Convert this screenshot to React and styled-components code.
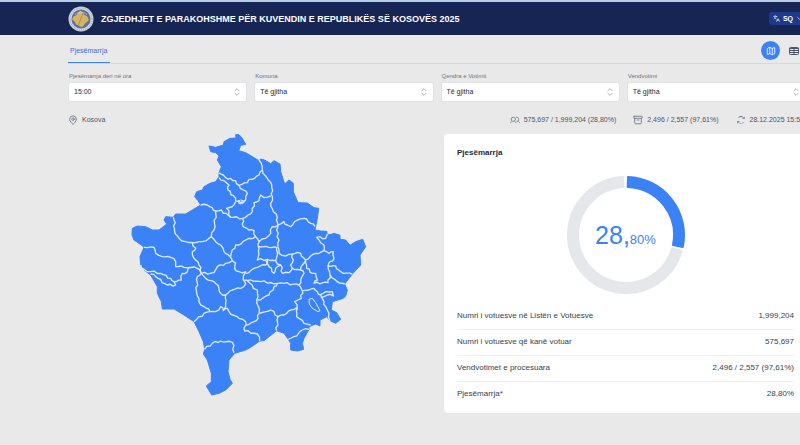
import styled, { createGlobalStyle } from "styled-components";
import { LuArchive, LuMapPin, LuMap, LuLanguages, LuChevronDown, LuChevronsUpDown } from "react-icons/lu";
import { PiUsers, PiArrowsClockwise } from "react-icons/pi";

const filters = [
  { id: "ora", label: "Pjesëmarrja deri në ora", value: "15:00" },
  { id: "komuna", label: "Komuna", value: "Të gjitha" },
  { id: "qendra", label: "Qendra e Votimit", value: "Të gjitha" },
  { id: "vendvotimi", label: "Vendvotimi", value: "Të gjitha" },
];

const rows = [
  ["Numri i votuesve në Listën e Votuesve", "1,999,204"],
  ["Numri i votuesve që kanë votuar", "575,697"],
  ["Vendvotimet e procesuara", "2,496 / 2,557 (97,61%)"],
  ["Pjesëmarrja*", "28,80%"],
];

const country =
  "255,48 275,52 298,45 300,35 318,25 336,24 335,14 345,14 354,24 365,43 350,46 344,62 365,68 405,92 410,87 422,90 440,101 450,92 468,102 470,125 482,162 495,150 508,160 508,185 522,218 550,219 570,233 584,235 580,265 573,300 590,303 608,304 610,315 622,313 630,310 648,316 648,328 665,330 678,346 695,335 716,328 725,350 708,375 710,405 685,432 662,462 670,480 665,498 658,505 625,515 622,540 638,548 650,568 635,580 618,572 608,560 588,570 588,588 575,582 555,590 555,598 540,625 535,640 539,658 520,663 500,660 500,640 493,628 480,610 458,602 435,620 420,632 407,633 380,652 365,660 332,670 315,690 312,725 318,748 325,760 305,780 285,790 263,795 247,768 262,755 262,730 250,690 238,672 242,658 238,635 225,605 210,575 180,555 150,537 115,537 112,515 100,490 100,470 80,435 60,420 50,405 48,380 60,352 52,345 30,330 24,315 25,295 40,288 65,290 85,300 105,300 118,290 128,282 120,270 125,260 148,262 155,252 185,252 205,240 230,225 222,212 212,200 218,185 235,180 240,170 258,160 275,155 285,140 285,128 292,110 280,90 285,78 275,68 260,65";

const borders = [
  "285,128 298,135 305,143 320,145 335,152 345,166 370,158 375,148 385,148 405,135 415,120 412,100 405,90",
  "285,143 300,152 315,165 312,180 328,197 335,213 350,218 362,215",
  "345,166 358,180 370,190 365,210 350,218",
  "335,215 325,230 308,235 320,262",
  "230,225 250,225 265,233 275,243 292,240 298,250 312,255 320,262 355,265 365,262 372,255 385,245 390,218 405,212 410,195 420,203 440,198",
  "415,120 430,145 443,165 445,200 440,220 448,245 460,262 462,285",
  "462,285 480,275 490,285 500,290 520,270 540,265 548,267 560,280 573,290",
  "275,243 270,300 262,320 235,335 205,338 185,335 165,325 152,305 150,270 148,262",
  "262,320 275,335 290,345 300,365 318,380",
  "355,265 358,290 375,300 390,302 395,320 405,335 425,325 440,310 445,290 462,285",
  "395,320 375,325 365,330 345,345 335,345 325,360 320,380",
  "205,338 215,355 205,365 210,385 225,405 232,430",
  "60,352 90,352 95,370 115,380 140,382 155,395 155,410 180,412 220,415 232,430",
  "232,430 270,428 280,410 305,400 325,392 318,380",
  "50,405 60,418 80,425 110,430 140,445 150,455 155,465 130,465 95,440 80,432",
  "150,455 172,450 175,430 190,425 195,412",
  "232,430 220,440 218,490 225,515 240,530 258,545",
  "210,575 240,550 258,545 275,545 290,530 298,542 310,535 315,545 345,565 365,575 362,603 400,612 407,633",
  "232,430 245,445 270,455 285,475 290,490 305,495 305,520 300,540",
  "305,495 325,480 350,475 365,462 358,450",
  "325,392 335,400 332,415 345,425 365,425 358,438 358,450 380,450 410,455 440,458 480,460 525,465 535,482",
  "365,430 385,418 400,412 425,405 430,390",
  "535,482 555,480 570,475 580,485 590,495 600,515 605,530 615,550 618,572",
  "590,493 605,485 625,485 628,498 610,495 590,503",
  "535,482 532,505 512,515 520,535 518,560 540,580 560,585",
  "520,532 500,540 480,555 462,560 440,540 425,545 405,550 402,565 390,575 365,585",
  "462,560 458,602",
  "370,452 388,475 400,480 398,510 405,548",
  "400,510 435,495 450,470 460,460",
  "493,628 510,620 535,600 555,598",
  "242,658 265,640 290,633 325,637 330,668",
  "405,335 405,355 403,380 400,390 430,388 455,392 460,375 458,352 435,352 405,350",
  "462,285 458,300 465,330 462,350 465,370 485,378 505,372 530,370 545,390",
  "545,390 560,378 575,370 600,362 600,345 585,330 578,322 605,325 610,312",
  "600,362 615,370 628,365 630,385 618,395 612,408 635,408 650,425 685,432",
  "545,390 535,405 530,420 540,430 530,450 525,465",
  "545,390 548,415 565,430 575,430 580,450 570,460 612,458 618,435 612,408",
  "618,435 640,455 662,462",
  "425,390 435,410 450,430 455,415 470,405 475,430 495,428 505,415 530,420",
  "505,372 508,390 500,405 505,415",
  "455,392 460,402 470,405",
];

const lakes = [
  "555,508 565,505 575,518 588,542 582,545 565,535 556,522",
  "342,213 350,210 360,213 356,221 345,221",
];

// breaks long straight stretches of a border into small bends
function bend(points) {
  const list = points.split(" ").map((p) => p.split(",").map(Number));
  const out = [list[0]];
  for (let i = 1; i < list.length; i++) {
    const [x1, y1] = list[i - 1];
    const [x2, y2] = list[i];
    const length = Math.hypot(x2 - x1, y2 - y1);
    const steps = Math.max(1, Math.round(length / 9));
    for (let s = 1; s < steps; s++) {
      const t = s / steps;
      const shift = (((x1 * 7 + y2 * 3 + s * 5) % 7) - 3) * 1.1;
      out.push([
        x1 + (x2 - x1) * t - ((y2 - y1) / length) * shift,
        y1 + (y2 - y1) * t + ((x2 - x1) / length) * shift,
      ]);
    }
    out.push([x2, y2]);
  }
  return out.join(" ");
}

// ring segment between two angles, in degrees clockwise from the top
function segment(from, to, outer, inner) {
  const point = (deg, r) => {
    const a = ((deg - 90) * Math.PI) / 180;
    return `${60 + r * Math.cos(a)} ${60 + r * Math.sin(a)}`;
  };
  const large = to - from > 180 ? 1 : 0;
  return `M${point(from, outer)} A${outer} ${outer} 0 ${large} 1 ${point(to, outer)} L${point(to, inner)} A${inner} ${inner} 0 ${large} 0 ${point(from, inner)} Z`;
}

function Emblem() {
  return (
    <svg width="26" height="26" viewBox="0 0 52 52" aria-hidden="true">
      <circle cx="26" cy="26" r="25" fill="#cfd6e0" />
      <circle cx="26" cy="26" r="22" fill="none" stroke="#8d98ab" strokeWidth="2" strokeDasharray="2 2" />
      <circle cx="26" cy="26" r="19" fill="#5a7193" />
      <path d="M24 9l6 4 3 5 5 2 4 8-4 4-4 3-4 6-4 1-5-3-5-2-2-5-6-5 3-6 6-3 3-4z" fill="#d8b365" />
      <path d="M30 14l-9 24" stroke="#b08e4b" strokeWidth="2" />
      <path d="M14 17q12-9 24 0" fill="none" stroke="#e7e9ee" strokeWidth="2" strokeDasharray="2 2" />
    </svg>
  );
}

function TableIcon() {
  return (
    <svg viewBox="0 0 20 20" fill="none" stroke="currentColor" strokeWidth="2" aria-hidden="true">
      <rect x="1" y="3" width="18" height="14" rx="2" />
      <path d="M1 5h18M1 9h18M1 13h18M10 5v12" />
    </svg>
  );
}

export default function App() {
  return (
    <>
      <GlobalStyle />
      <Page>
        <Header>
          <Inner>
            <Brand>
              <Emblem />
              <Title>ZGJEDHJET E PARAKOHSHME PËR KUVENDIN E REPUBLIKËS SË KOSOVËS 2025</Title>
            </Brand>
            <Language type="button">
              <LuLanguages />
              SQ
              <LuChevronDown />
            </Language>
          </Inner>
        </Header>

        <Main>
          <Tabs>
            <Tab type="button">Pjesëmarrja</Tab>
            <Views>
              <ViewButton type="button" aria-label="Harta" $active>
                <LuMap />
              </ViewButton>
              <ViewButton type="button" aria-label="Tabela">
                <TableIcon />
              </ViewButton>
            </Views>
          </Tabs>

          <Filters>
            {filters.map((f) => (
              <Field key={f.id}>
                <Label htmlFor={f.id}>{f.label}</Label>
                <SelectBox>
                  <Select id={f.id}>
                    <option>{f.value}</option>
                  </Select>
                  <LuChevronsUpDown />
                </SelectBox>
              </Field>
            ))}
          </Filters>

          <Summary>
            <Fact>
              <LuMapPin />
              Kosova
            </Fact>
            <Facts>
              <Fact>
                <PiUsers />
                575,697 / 1,999,204 (28,80%)
              </Fact>
              <Fact>
                <LuArchive />
                2,496 / 2,557 (97,61%)
              </Fact>
              <Fact>
                <PiArrowsClockwise />
                28.12.2025 15:58
              </Fact>
            </Facts>
          </Summary>

          <Content>
            <MapArea>
              <svg width="236" height="262" viewBox="21 12 708 786" role="img" aria-label="Kosova">
                <polygon points={country} fill="#3b82f6" stroke="#3b82f6" strokeWidth="3" strokeLinejoin="round" />
                <g fill="none" stroke="#dbeafe" strokeWidth="4" strokeLinejoin="round">
                  {borders.map((points) => (
                    <polyline key={points} points={bend(points)} />
                  ))}
                  {lakes.map((points) => (
                    <polygon key={points} points={points} strokeWidth="3" />
                  ))}
                </g>
              </svg>
            </MapArea>

            <Card>
              <CardTitle>Pjesëmarrja</CardTitle>
              <Chart>
                <svg width="120" height="120" viewBox="0 0 120 120" aria-hidden="true">
                  <g strokeWidth="2" strokeLinejoin="round">
                    <path d={segment(106, 357, 58, 48)} fill="#e5e7eb" stroke="#e5e7eb" />
                    <path d={segment(2, 102, 58, 48)} fill="#3b82f6" stroke="#3b82f6" />
                  </g>
                </svg>
                <Percent>
                  28,<small>80%</small>
                </Percent>
              </Chart>
              <Table>
                <tbody>
                  {rows.map(([name, value]) => (
                    <tr key={name}>
                      <th scope="row">{name}</th>
                      <td>{value}</td>
                    </tr>
                  ))}
                </tbody>
              </Table>
            </Card>
          </Content>
        </Main>
      </Page>
    </>
  );
}

const GlobalStyle = createGlobalStyle`
  * {
    box-sizing: border-box;
  }

  body {
    margin: 0;
    background: #e9e9e9;
    color: #374151;
    font-family: "Liberation Sans", Arial, sans-serif;
    font-size: 8px;
    line-height: 12px;
  }

  button,
  select {
    font: inherit;
  }
`;

const Page = styled.div`
  min-height: 100vh;
  overflow: hidden;
`;

const Header = styled.header`
  background: #172554;
  border-top: 2px solid #b5cde4;
`;

const Inner = styled.div`
  display: flex;
  align-items: center;
  justify-content: space-between;
  height: 33px;
  margin: 0 -6px 0 68px;
`;

const Brand = styled.div`
  display: flex;
  align-items: center;
  gap: 7px;
`;

const Title = styled.h1`
  margin: 0;
  color: #fff;
  font-size: 9px;
  font-weight: 700;
`;

const Language = styled.button`
  display: flex;
  align-items: center;
  gap: 3px;
  height: 13px;
  padding: 0 3px 0 4px;
  border: 0;
  border-radius: 3px;
  background: #1e3a8a;
  color: #fff;
  font-size: 7px;
  font-weight: 700;
  white-space: nowrap;

  svg {
    width: 7px;
    height: 7px;
  }
`;

const Main = styled.main`
  margin: 0 -6px 0 68px;
`;

const Tabs = styled.div`
  display: flex;
  align-items: flex-end;
  justify-content: space-between;
  height: 29px;
  border-bottom: 1px solid #d6d9de;
`;

const Tab = styled.button`
  height: 24px;
  padding: 0 3px 0 2px;
  border: 0;
  border-bottom: 1px solid #3b82f6;
  background: none;
  color: #3b6fe0;
  font-size: 7px;
`;

const Views = styled.div`
  display: flex;
  gap: 4px;
  padding: 0 3px 3px 0;
`;

const ViewButton = styled.button`
  display: grid;
  place-items: center;
  width: 19px;
  height: 19px;
  padding: 0;
  border: 0;
  border-radius: 50%;
  background: ${(p) => (p.$active ? "#3b82f6" : "none")};
  color: ${(p) => (p.$active ? "#fff" : "#4b5563")};

  svg {
    width: 10px;
    height: 10px;
  }
`;

const Filters = styled.div`
  display: grid;
  grid-template-columns: repeat(4, 1fr);
  gap: 7px;
  padding-top: 7px;
`;

const Field = styled.div`
  display: flex;
  flex-direction: column;
`;

const Label = styled.label`
  padding-left: 1px;
  color: #6b7280;
  font-size: 6px;
  line-height: 11px;
`;

const SelectBox = styled.div`
  position: relative;

  svg {
    position: absolute;
    top: 5px;
    right: 5px;
    width: 10px;
    height: 10px;
    color: #9ca3af;
    pointer-events: none;
  }
`;

const Select = styled.select`
  appearance: none;
  display: block;
  width: 100%;
  height: 20px;
  padding: 0 5px;
  border: 1px solid #e1e3e7;
  border-radius: 3px;
  background: #fff;
  color: #1f2937;
  font-size: 7px;
`;

const Summary = styled.div`
  display: flex;
  justify-content: space-between;
  padding: 12px 2px 8px 0;
`;

const Facts = styled.div`
  display: flex;
  gap: 17px;
`;

const Fact = styled.span`
  display: flex;
  align-items: center;
  gap: 4px;
  color: #4b5563;
  font-size: 7px;
  white-space: nowrap;

  svg {
    width: 10px;
    height: 10px;
    color: #6b7280;
  }
`;

const Content = styled.div`
  display: grid;
  grid-template-columns: 1fr 1fr;
  align-items: start;
  gap: 14px;
`;

const MapArea = styled.div`
  display: flex;
  justify-content: center;
`;

const Card = styled.section`
  padding: 13px 12px 6px 13px;
  border-radius: 4px;
  background: #fff;
`;

const CardTitle = styled.h2`
  margin: 0;
  color: #1f2937;
  font-size: 8px;
  line-height: 12px;
`;

const Chart = styled.div`
  position: relative;
  display: flex;
  justify-content: center;
  padding: 16px 0 8px;
`;

const Percent = styled.div`
  position: absolute;
  inset: 16px 0 8px;
  display: flex;
  align-items: baseline;
  justify-content: center;
  color: #3b82f6;
  font-size: 25px;
  line-height: 120px;

  small {
    font-size: 13px;
  }
`;

const Table = styled.table`
  width: 100%;
  border-collapse: collapse;

  th,
  td {
    height: 26px;
    padding: 0;
    font-weight: 400;
    text-align: left;
  }

  td {
    text-align: right;
  }

  tr + tr {
    border-top: 1px solid #eef0f2;
  }
`;
